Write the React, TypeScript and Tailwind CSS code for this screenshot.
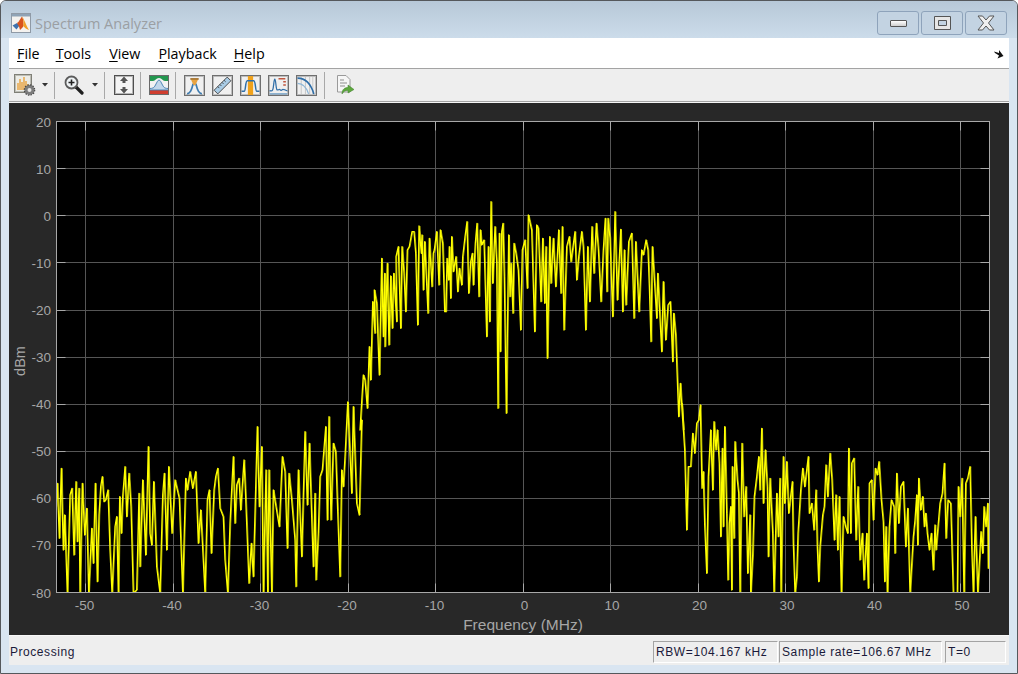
import React from "react";

type P = [number, number];
const z5: P[] = [[30,720],[40,555],[45,570],[52,655],[58,470],[62,570],[68,335],[75,430],[73,300],[80,340],[88,555],[95,205],[100,440],[104,250],[105,470],[112,220],[117,465],[122,258],[127,415],[131,250],[140,395],[138,200],[145,170],[152,415],[156,170],[162,250],[167,365],[172,180],[178,170],[186,125],[192,125],[197,190],[203,405],[207,108],[214,190],[216,135],[220,300],[224,155],[234,370],[238,145],[246,290],[250,190],[253,180],[260,125],[267,285],[271,120],[278,160],[284,365],[288,365],[291,205],[296,270],[298,170],[302,325],[305,140],[310,245],[318,200],[323,305],[328,235],[335,285],[338,200],[345,140],[351,95],[356,310],[362,215],[367,190],[370,285],[376,160],[381,100],[387,320],[391,120],[395,165],[402,150],[410,440],[415,170],[419,395],[423,35],[428,280],[435,110],[440,220],[444,655],[448,130],[451,485],[455,125],[459,100],[463,260],[469,670],[476,135],[480,320],[483,220],[489,370],[492,160],[498,190],[505,240],[512,420],[517,180],[525,150],[532,295],[535,75]];
const z6: P[] = [[35,120],[44,425],[50,105],[55,115],[63,335],[68,145],[74,340],[78,170],[82,505],[89,140],[93,280],[100,145],[107,290],[116,120],[123,310],[127,110],[132,420],[140,170],[148,140],[153,215],[165,125],[170,270],[176,200],[185,125],[190,170],[197,420],[203,170],[209,335],[216,110],[222,250],[229,100],[235,175],[243,335],[250,180],[256,85],[261,305],[264,85],[270,145],[278,380],[285,65],[292,330],[302,118],[308,365],[313,180],[318,345],[326,155],[335,130],[342,385],[347,155],[357,365],[365,180],[370,195],[378,150],[384,180],[388,285],[393,455],[397,170],[402,250],[410,385],[413,250],[425,485],[430,275],[437,450],[444,345],[451,335],[458,515],[461,370],[467,435],[476,680],[481,580],[490,720]];
const z7: P[] = [[18,260],[22,190],[28,355],[34,145],[40,390],[44,285],[52,520],[60,225],[66,205],[72,405],[78,185],[82,365],[87,205],[90,520],[97,190],[104,345],[110,265],[116,520],[125,325],[130,430],[136,190],[142,485],[147,285],[152,200],[157,170],[162,245],[167,240],[174,210],[180,390],[186,520],[195,320],[200,290],[205,520],[209,230],[214,340],[218,230],[225,140],[230,290],[237,160],[243,260],[250,520],[260,510],[267,220],[270,440],[278,180],[287,405],[295,80],[300,340],[305,375],[311,185],[320,440],[330,520],[338,225],[343,160],[350,390],[356,140],[366,340],[375,180],[388,235],[398,520],[407,175],[412,210],[420,155],[428,205],[437,155],[445,370],[452,270],[465,520],[472,240],[478,210],[484,400],[492,210],[497,170],[503,145],[510,265],[520,290],[525,420],[533,520],[540,310],[550,110],[555,310],[560,195],[567,175],[572,270],[582,120],[586,205],[597,490],[604,370],[610,470],[622,20],[628,260],[635,80],[640,520],[648,150],[653,520],[657,150],[665,520],[670,210],[678,260],[688,320],[697,110],[705,155],[712,385],[717,160],[725,240],[735,360],[738,500],[745,150],[755,410],[765,35],[772,255],[778,70],[790,440],[795,220],[798,480],[805,340],[810,170],[817,150],[827,20],[832,300],[837,-10],[843,300],[850,70],[857,95],[863,275],[870,470],[875,150],[880,200],[885,110],[893,-54],[905,220],[910,-40],[920,250],[928,285],[935,0]];
const z8: P[] = [[5,10],[14,150],[20,390],[25,200],[32,200],[38,100],[44,160],[50,70],[56,60],[61,15],[66,265],[70,215],[74,375],[80,520],[85,230],[92,90],[98,270],[102,65],[108,150],[112,90],[118,190],[122,410],[127,145],[130,380],[134,80],[140,340],[144,540],[148,370],[152,320],[155,570],[157,200],[162,415],[165,125],[172,240],[176,280],[180,580],[186,130],[192,350],[198,260],[203,520],[210,345],[212,580],[218,465],[223,290],[230,230],[236,170],[240,270],[245,85],[250,310],[256,150],[262,260],[265,470],[270,235],[278,400],[282,580],[290,280],[295,410],[300,235],[303,580],[310,170],[314,310],[320,185],[326,340],[337,245],[340,430],[345,580],[350,530],[354,400],[362,270],[368,205],[374,260],[385,170],[388,340],[395,310],[402,390],[408,270],[412,440],[416,545],[420,440],[428,345],[433,320],[438,195],[443,290],[450,160],[456,240],[463,420],[468,285],[473,450],[478,290],[484,580],[490,350],[497,380],[503,400],[506,145],[512,400],[515,190],[522,175],[528,420],[534,260],[540,480],[547,400],[552,540],[560,400],[565,565],[568,250],[575,240],[580,360],[586,205],[592,225],[597,185],[604,300],[610,365],[614,545],[618,380],[622,580],[628,380],[634,300],[642,320],[645,460],[650,220],[656,370],[662,260],[670,245],[677,440],[683,325],[690,580],[700,410],[705,360],[710,285],[713,435],[716,235],[722,330],[728,290],[733,380],[737,340],[742,400],[748,450],[754,400],[760,510],[765,375],[768,450],[775,370],[780,310],[787,280],[793,190],[798,415],[804,300],[812,310],[820,580],[832,580],[835,260],[840,350],[846,235],[852,580],[857,250],[863,235],[870,200],[875,440],[880,580],[886,350],[893,580],[903,395],[908,460],[912,320],[918,380],[923,310],[925,505],[930,270]];

const map = (a: P[], ox: number, oy: number) =>
  a.map(([x, y]) => `${(ox + x / 3).toFixed(1)},${(oy + y / 3).toFixed(1)}`).join(" ");
const trace = [map(z7, 50, 420), map(z5, 350, 190), map(z6, 520, 190), map(z8, 680, 400)].join(" ");

const xTicks = [-50, -40, -30, -20, -10, 0, 10, 20, 30, 40, 50];
const yTicks = [20, 10, 0, -10, -20, -30, -40, -50, -60, -70, -80];
const xPos = (v: number) => 523 + v * 8.75;
const yPos = (v: number) => 121.5 + ((20 - v) / 10) * 47.1;

function Chart() {
  const L = 56.5, R = 989.5, T = 121.5, B = 592.5;
  return (
    <svg viewBox="9 103 1000 532" className="block w-full h-[532px]" style={{ fontFamily: '"Liberation Sans", Arial, sans-serif' }}>
      <defs>
        <clipPath id="axes"><rect x={L} y={T} width={R - L} height={B - T} /></clipPath>
      </defs>
      <rect x={L} y={T} width={R - L} height={B - T} fill="#000" />
      {xTicks.map((v) => {
        const x = Math.floor(xPos(v)) + 0.5;
        return (
          <g key={v}>
            <line x1={x} x2={x} y1={T} y2={B} stroke="#565656" />
            <line x1={x} x2={x} y1={T} y2={T + 9} stroke="#a8a8a8" />
            <line x1={x} x2={x} y1={B - 9} y2={B} stroke="#a8a8a8" />
            <text x={xPos(v) + (v < 0 ? -1 : 1.5)} y={610} textAnchor="middle" fontSize="13.5" fill="#a6a6a6">{v}</text>
          </g>
        );
      })}
      {yTicks.map((v) => {
        const y = Math.floor(yPos(v) + 0.1) + 0.5;
        return (
          <g key={v}>
            <line x1={L} x2={R} y1={y} y2={y} stroke="#565656" />
            <line x1={L} x2={L + 9} y1={y} y2={y} stroke="#a8a8a8" />
            <line x1={R - 9} x2={R} y1={y} y2={y} stroke="#a8a8a8" />
            <text x={51} y={yPos(v) + 5} textAnchor="end" fontSize="13.5" fill="#a6a6a6">{v}</text>
          </g>
        );
      })}
      <g clipPath="url(#axes)">
        <polyline points={trace} fill="none" stroke="#ffff00" strokeWidth="1.3" strokeLinejoin="round" />
        <polyline points={trace} fill="none" stroke="#ffff00" strokeWidth="1" strokeLinejoin="round" opacity="0.6" transform="translate(0.8 0)" />
      </g>
      <rect x={L} y={T} width={R - L} height={B - T} fill="none" stroke="#a8a8a8" />
      <text x={523} y={630} textAnchor="middle" fontSize="15.5" fill="#a6a6a6">Frequency (MHz)</text>
      <text transform="translate(24.5 361) rotate(-90)" textAnchor="middle" fontSize="14.5" fill="#a6a6a6">dBm</text>
    </svg>
  );
}

function Frame({ children, className = "" }: { children?: React.ReactNode; className?: string }) {
  return (
    <svg viewBox="0 0 20 20" className={"w-[21px] h-[21px] shrink-0 " + className}>
      <rect x="0.5" y="0.5" width="19" height="19" fill="#f0f0f0" stroke="#6f6f6f" strokeWidth="1" />
      <rect x="1.5" y="1.5" width="17" height="17" fill="none" stroke="#b5b5b5" strokeWidth="0.8" />
      {children}
    </svg>
  );
}

const Sep = ({ className }: { className: string }) => <div className={"w-px h-[27px] bg-[#a8a8a8] shrink-0 " + className} />;
const Caret = ({ className }: { className: string }) => (
  <svg viewBox="0 0 6 4" className={"w-[6px] h-[4px] shrink-0 " + className}><path d="M0 0h6L3 3.500z" fill="#333" /></svg>
);

function SpectrumSettingsIcon() {
  return (
    <svg viewBox="0 0 22 22" className="w-[22px] h-[22px] shrink-0">
      <rect x="0.5" y="0.5" width="17" height="18" fill="#ecece6" stroke="#7f7f76" />
      <rect x="1.500" y="1.500" width="15" height="16" fill="none" stroke="#bdbdb5" />
      <path d="M4 16V9M6 16V5M8 16V8M10 16V3M12 16V7M14 16V10" stroke="#eaa23c" strokeWidth="1.4" fill="none" />
      <circle cx="15.500" cy="16" r="5" fill="#7c7c7c" />
      <circle cx="15.500" cy="16" r="5.200" fill="none" stroke="#4a4a4a" strokeDasharray="1.500 1.200" strokeWidth="1.200" />
      <circle cx="15.500" cy="16" r="2" fill="#e8e8e8" />
    </svg>
  );
}
function ZoomIcon() {
  return (
    <svg viewBox="0 0 20 20" className="w-[20px] h-[20px] shrink-0">
      <path d="M12 12l6 6" stroke="#1f1f1f" strokeWidth="3.200" strokeLinecap="round" />
      <circle cx="7.500" cy="7.500" r="6" fill="#eef2f4" stroke="#5c5c5c" strokeWidth="1.800" />
      <path d="M4.500 7.500h6M7.500 4.500v6" stroke="#222" strokeWidth="1.600" />
    </svg>
  );
}
function ScaleIcon() {
  return (
    <svg viewBox="0 0 20 20" className="w-[20px] h-[20px] shrink-0">
      <rect x="0.500" y="0.500" width="19" height="19" fill="#f4f4f4" stroke="#4f4f4f" />
      <rect x="1.500" y="1.500" width="17" height="17" fill="none" stroke="#b5b5b5" />
      <path d="M10 1.500l4 4.500h-2.500v2h-3V6H6zM10 18.500l4-4.500h-2.500v-2h-3v2H6z" fill="#555" />
    </svg>
  );
}
function SpectralMaskIcon() {
  return (
    <svg viewBox="0 0 20 20" className="w-[20px] h-[20px] shrink-0">
      <rect x="0" y="0" width="20" height="20" fill="#f2f2f2" />
      <path d="M0 0h20v6h-4C13.500 6 13 3 10 3S6.500 6 4 6H0z" fill="#23974f" />
      <path d="M0 15h20v5H0z" fill="#d03e2f" />
      <path d="M0 13.500c4 0 5-.5 6.500-3.500S9 5 10 5s2 2 3.500 5 2.500 3.500 6.500 3.500V15H0z" fill="#c2d7ea" stroke="#3f7cb0" strokeWidth="0.9" />
      <rect x="0.500" y="0.500" width="19" height="19" fill="none" stroke="#6a6a6a" />
    </svg>
  );
}
function DistortionIcon() {
  return (
    <Frame>
      <path d="M3 18c3-1 4-3 5.500-9h3C13 15 14 17 17 18" fill="none" stroke="#3f7cb0" strokeWidth="1.600" />
      <path d="M6.500 4h7L11 9.500H9z" fill="#e8a341" />
      <rect x="6" y="3" width="8" height="1.500" fill="#a06a20" />
    </Frame>
  );
}
function RulerIcon() {
  return (
    <Frame>
      <path d="M2 14.500L14.500 2l3.500 3.500L5.500 18z" fill="#a9cce6" stroke="#444" strokeWidth="0.9" />
      <path d="M5.500 11l1.500 1.500M7.500 9l1.500 1.500M9.500 7l1.500 1.500M11.500 5l1.500 1.500" stroke="#333" strokeWidth="0.8" />
    </Frame>
  );
}
function ChannelIcon() {
  return (
    <Frame>
      <rect x="7.500" y="1" width="5" height="18" fill="#f0a21c" />
      <path d="M1.500 15.500H4c1.500 0 1-10 3-10h6c2 0 1.500 10 3 10h2.500" fill="none" stroke="#2f6ea8" strokeWidth="1.400" />
    </Frame>
  );
}
function PeakIcon() {
  return (
    <Frame>
      <path d="M1.500 15c2 0 2 1 3-1s1-10 2-10 1 9 2 10 2-1 3 0 1 1 2 0 1 0 2 0 1 1 3 1" fill="none" stroke="#2f6ea8" strokeWidth="1.200" />
      <path d="M1.500 18h17" stroke="#6a9cc6" strokeWidth="1.200" />
      <path d="M10 3.500h6.500M14.500 6.500h2.500M14.500 9.500h2.500" stroke="#c0563f" strokeWidth="1.400" />
    </Frame>
  );
}
function CcdfIcon() {
  return (
    <Frame>
      <path d="M5 2v16M9 2v16M13 2v16M16 2v16" stroke="#c9c9c9" strokeWidth="1" />
      <path d="M1.500 3C9 3 14 8 17 18" fill="none" stroke="#2f6ea8" strokeWidth="1.500" />
      <path d="M1.500 8C7 8 10 12 12 18" fill="none" stroke="#8db6d6" strokeWidth="1.200" />
    </Frame>
  );
}
function ExportIcon() {
  return (
    <svg viewBox="0 0 20 20" className="w-[20px] h-[20px] shrink-0">
      <path d="M2.500 .5H11l4 4V17H2.500z" fill="#f6f6f6" stroke="#9a9a9a" />
      <path d="M5 5h4M5 8h7M5 11h5" stroke="#8f8f8f" />
      <path d="M7 19c0-5 3-6.500 6-6.500V10l6 4.500L13 18v-2.500c-3 0-4.500 1-6 3.500z" fill="#5ea83e" stroke="#3f7f2a" strokeWidth="0.5" />
    </svg>
  );
}
function Logo() {
  return (
    <svg viewBox="0 0 20 20" className="w-[20px] h-[20px] shrink-0">
      <rect x="0.500" y="0.500" width="19" height="19" fill="#f4f2ef" stroke="#8f9aa6" />
      <rect x="1" y="1" width="18" height="2.500" fill="#8fa3b6" />
      <path d="M1.500 12.500l4.500-2.500 2.500 2.500-3 4z" fill="#3f73ae" />
      <path d="M6 10c2-1 3-4 5-6.500 1.500 3 2 7 1 10.500l-3 3-1-3.500z" fill="#d9541e" />
      <path d="M11 3.500c2.500 3 3.500 8 7 13.500-2.500-1-4-2-6-4 1-3 .5-6.500-1-9.500z" fill="#f0a12a" />
    </svg>
  );
}

const winBtn = "w-[42px] h-[24px] flex items-center justify-center rounded-[3px] border border-[#8ea3bb] bg-[#c3d3e2]";

function StatusCell({ text, className }: { text: string; className: string }) {
  return (
    <div className={"h-[22px] flex items-center pl-[2px] border border-t-[#a3a3a3] border-l-[#a3a3a3] border-r-white border-b-white text-[12px] tracking-[0.6px] whitespace-nowrap text-[#1a1a3a] shrink-0 " + className}>{text}</div>
  );
}

const Menu = ({ k, rest, className }: { k: string; rest: string; className: string }) => (
  <span className={"text-[14.3px] text-black " + className}><span className="underline underline-offset-2">{k}</span>{rest}</span>
);

export default function App() {
  return (
    <div className="w-[1018px] h-[674px] bg-white" style={{ fontFamily: '"Open Sans", "Liberation Sans", sans-serif' }}>
      <div className="w-full h-full flex flex-col border border-[#55585c] rounded-t-[6px] bg-[#d9e5f1] overflow-hidden">
        <div className="h-[37px] shrink-0 flex items-start pl-[10px] bg-gradient-to-b from-[#b7c8d8] to-[#ccdcea]">
          <div className="mt-[12px]"><Logo /></div>
          <span className="ml-[4px] mt-[12px] text-[14.5px] text-[#9b9fa3] whitespace-nowrap">Spectrum Analyzer</span>
          <div className="ml-auto mt-[10px] mr-[10px] flex items-center gap-[2px]">
            <div className={winBtn}>
              <div className="w-[17px] h-[7px] mt-[1px] rounded-[1px] border border-[#555] bg-gradient-to-b from-white to-[#cfcfcf]" />
            </div>
            <div className={winBtn}>
              <svg viewBox="0 0 17 14" className="w-[17px] h-[14px]">
                <path d="M.5.500h16v13H.5zM4.500 4.500v5h8v-5z" fill="#e6e6e6" stroke="#555" strokeWidth="1" fillRule="evenodd" />
              </svg>
            </div>
            <div className={winBtn}>
              <svg viewBox="0 0 18 16" className="w-[18px] h-[16px]">
                <path d="M1 1h4.500L9 5l3.500-4H17l-5.500 7 5.500 7h-4.500L9 11l-3.500 4H1l5.500-7z" fill="#efefef" stroke="#555" strokeWidth="1" />
              </svg>
            </div>
          </div>
        </div>
        <div className="flex-1 flex flex-col mx-[8px] min-h-0">
          <div className="h-[30px] shrink-0 bg-white flex items-center pt-[2px]">
            <Menu k="F" rest="ile" className="ml-[8px]" />
            <Menu k="T" rest="ools" className="ml-[16px]" />
            <Menu k="V" rest="iew" className="ml-[18px]" />
            <Menu k="P" rest="layback" className="ml-[18px]" />
            <Menu k="H" rest="elp" className="ml-[17px]" />
            <svg viewBox="0 0 10 9" className="w-[10px] h-[9px] ml-auto mr-[5px]"><path d="M0 1.500L5 3V0l4.500 6-6 2.500 1.500-3L1 3z" fill="#111" /></svg>
          </div>
          <div className="h-[34px] shrink-0 bg-[#eeeeee] border-y border-[#a3a3a3] flex items-center">
            <div className="ml-[5px]"><SpectrumSettingsIcon /></div>
            <Caret className="ml-[6px]" />
            <Sep className="ml-[6px]" />
            <div className="ml-[9px]"><ZoomIcon /></div>
            <Caret className="ml-[8px]" />
            <Sep className="ml-[6px]" />
            <div className="ml-[9px]"><ScaleIcon /></div>
            <Sep className="ml-[6px]" />
            <div className="ml-[8px]"><SpectralMaskIcon /></div>
            <Sep className="ml-[6px]" />
            <div className="ml-[8px] flex gap-[7px]">
              <DistortionIcon />
              <RulerIcon />
              <ChannelIcon />
              <PeakIcon />
              <CcdfIcon />
            </div>
            <Sep className="ml-[7px]" />
            <div className="ml-[10px]"><ExportIcon /></div>
          </div>
          <div className="h-px shrink-0 bg-[#f6f6f6]" />
          <div className="h-[532px] shrink-0 bg-[#282828]"><Chart /></div>
          <div className="h-px shrink-0 bg-[#f8f8f8]" />
          <div className="h-[29px] shrink-0 bg-[#eeeeee] flex items-center pt-[2px]" style={{ fontFamily: '"Liberation Sans", Arial, sans-serif' }}>
            <span className="ml-[1px] text-[12px] tracking-[0.55px] text-[#1a1a3a]">Processing</span>
            <StatusCell text="RBW=104.167 kHz" className="ml-auto w-[125px]" />
            <StatusCell text="Sample rate=106.67 MHz" className="ml-[1px] w-[163px]" />
            <StatusCell text="T=0" className="ml-[3px] mr-[3px] w-[61px]" />
          </div>
        </div>
      </div>
    </div>
  );
}
